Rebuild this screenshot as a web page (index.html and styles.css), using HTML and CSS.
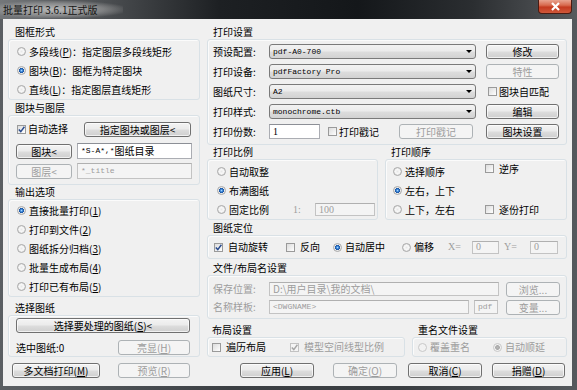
FILE: index.html
```html
<!DOCTYPE html>
<html lang="zh-CN">
<head>
<meta charset="utf-8">
<title>批量打印</title>
<link rel="stylesheet" href="styles.css">
</head>
<body>
<div class="window">
  <div class="titlebar">
    <span class="title">批量打印 3.6.1正式版</span>
    <span class="close"><svg width="11" height="9" viewBox="0 0 11 9"><path d="M2 1 L9 8 M9 1 L2 8" stroke="#fff" stroke-width="2.2"/></svg></span>
  </div>
  <div class="client">
    <div class="main">
      <div class="col-left">
        <div class="glabel">图框形式</div>
        <div class="gbox box-frame">
          <div class="opt r19"><span class="radio"></span><span>多段线(<u>P</u>)：指定图层多段线矩形</span></div>
          <div class="opt r19"><span class="radio on"></span><span>图块(<u>B</u>)：图框为特定图块</span></div>
          <div class="opt r19"><span class="radio"></span><span>直线(<u>L</u>)：指定图层直线矩形</span></div>
        </div>
        <div class="glabel mt1">图块与图层</div>
        <div class="gbox box-layer">
          <div class="row16">
            <span class="check on ml1"><svg width="7" height="7" viewBox="0 0 7 7"><path d="M0.8 3.4 L2.8 5.6 L6.4 0.8" class="tick"/></svg></span><span class="ctext">自动选择</span>
            <span class="btn w107 mla">指定图块或图层&lt;</span>
          </div>
          <div class="row16 mt6">
            <span class="btn w56">图块&lt;</span>
            <span class="input w115 ml5"><span class="mono">*S-A*,*</span>图纸目录</span>
          </div>
          <div class="row16 mt4">
            <span class="btn dis w56">图层&lt;</span>
            <span class="input dis w115 ml5 mono gray">*_title</span>
          </div>
        </div>
        <div class="glabel">输出选项</div>
        <div class="gbox box-out">
          <div class="opt r19"><span class="radio on"></span><span>直接批量打印(<u>1</u>)</span></div>
          <div class="opt r19"><span class="radio"></span><span>打印到文件(<u>2</u>)</span></div>
          <div class="opt r19"><span class="radio"></span><span>图纸拆分归档(<u>3</u>)</span></div>
          <div class="opt r19"><span class="radio"></span><span>批量生成布局(<u>4</u>)</span></div>
          <div class="opt r19"><span class="radio"></span><span>打印已有布局(<u>5</u>)</span></div>
        </div>
        <div class="glabel mt4">选择图纸</div>
        <div class="gbox box-sel">
          <div class="row15"><span class="btn w174">选择要处理的图纸(<u>S</u>)&lt;</span></div>
          <div class="row15 mt7"><span>选中图纸:0</span><span class="btn dis w72 mla">亮显(<u>H</u>)</span></div>
        </div>
      </div>

      <div class="col-right">
        <div class="glabel">打印设置</div>
        <div class="gbox box-print">
          <div class="prow">
            <span class="plabel">预设配置:</span>
            <span class="combo w207"><span class="mono">pdf-A0-700</span><span class="arrow"></span></span>
            <span class="btn w73 ml10">修改</span>
          </div>
          <div class="prow mt5">
            <span class="plabel">打印设备:</span>
            <span class="combo w207"><span class="mono">pdfFactory Pro</span><span class="arrow"></span></span>
            <span class="btn dis w73 ml10">特性</span>
          </div>
          <div class="prow mt5">
            <span class="plabel">图纸尺寸:</span>
            <span class="combo w207"><span class="mono">A2</span><span class="arrow"></span></span>
            <span class="check ml12"></span><span class="ctext">图块自匹配</span>
          </div>
          <div class="prow mt5">
            <span class="plabel">打印样式:</span>
            <span class="combo w207"><span class="mono">monochrome.ctb</span><span class="arrow"></span></span>
            <span class="btn w73 ml10">编辑</span>
          </div>
          <div class="prow mt5">
            <span class="plabel">打印份数:</span>
            <span class="copies">
              <span class="input w51 serif">1</span>
              <span class="check ml8"></span><span class="ctext">打印戳记</span>
              <span class="btn dis w74 mla mr3">打印戳记</span>
            </span>
            <span class="btn w73 ml10">图块设置</span>
          </div>
        </div>

        <div class="pair">
          <div class="sub-l">
            <div class="glabel">打印比例</div>
            <div class="gbox box-scale">
              <div class="opt r19"><span class="radio"></span><span>自动取整</span></div>
              <div class="opt r19"><span class="radio on"></span><span>布满图纸</span></div>
              <div class="opt r19"><span class="radio"></span><span class="scale-t">固定比例</span><span class="gray ratio serif">1:</span><span class="input dis w60 h13 serif gray">100</span></div>
            </div>
          </div>
          <div class="sub-r">
            <div class="glabel">打印顺序</div>
            <div class="gbox box-order">
              <div class="opt r19"><span class="radio"></span><span>选择顺序</span></div>
              <div class="opt r19 up2"><span class="check"></span><span class="ctext">逆序</span></div>
              <div class="opt r19"><span class="radio on"></span><span>左右，上下</span></div>
              <div class="opt r19"></div>
              <div class="opt r19"><span class="radio"></span><span>上下，左右</span></div>
              <div class="opt r19"><span class="check"></span><span class="ctext">逐份打印</span></div>
            </div>
          </div>
        </div>

        <div class="glabel mt1">图纸定位</div>
        <div class="gbox box-pos">
          <div class="opt"><span class="check on"><svg width="7" height="7" viewBox="0 0 7 7"><path d="M0.8 3.4 L2.8 5.6 L6.4 0.8" class="tick"/></svg></span><span class="ctext">自动旋转</span></div>
          <div class="opt"><span class="check"></span><span class="ctext">反向</span></div>
          <div class="opt"><span class="radio on"></span><span>自动居中</span></div>
          <div class="opt"><span class="radio"></span><span>偏移</span></div>
          <div class="opt gray serif">X=</div>
          <span class="input dis h13 serif gray">0</span>
          <div class="opt gray serif pl5">Y=</div>
          <span class="input dis h13 serif gray">0</span>
        </div>

        <div class="glabel mt2">文件/布局名设置</div>
        <div class="gbox box-file">
          <div class="frow">
            <span class="plabel gray">保存位置:</span>
            <span class="input dis w230 gray">D:\用户目录\我的文档\</span>
            <span class="btn dis w54 ml7">浏览...</span>
          </div>
          <div class="frow mt4">
            <span class="plabel gray">名称样板:</span>
            <span class="input dis w200 mono gray">&lt;DWGNAME&gt;</span>
            <span class="input dis w24 ml5 mono gray">pdf</span>
            <span class="btn dis w54 ml8">变量...</span>
          </div>
        </div>

        <div class="pair mt4">
          <div class="sub-l2">
            <div class="glabel pl5">布局设置</div>
            <div class="gbox box-layout">
              <div class="opt w78"><span class="check"></span><span class="ctext">遍历布局</span></div>
              <div class="opt gray"><span class="check dis on"><svg width="7" height="7" viewBox="0 0 7 7"><path d="M0.8 3.4 L2.8 5.6 L6.4 0.8" class="tick"/></svg></span><span class="ctext">模型空间线型比例</span></div>
            </div>
          </div>
          <div class="sub-r2">
            <div class="glabel">重名文件设置</div>
            <div class="gbox box-dup">
              <div class="opt w75 gray"><span class="radio dis"></span><span>覆盖重名</span></div>
              <div class="opt gray"><span class="radio dis on"></span><span>自动顺延</span></div>
            </div>
          </div>
        </div>
      </div>
    </div>

    <div class="bottom">
      <span class="btn w88">多文档打印(<u>M</u>)</span>
      <span class="btn dis w72 ml18">预览(<u>R</u>)</span>
      <span class="btn w74 ml50">应用(<u>L</u>)</span>
      <span class="btn dis w64 ml19">确定(<u>O</u>)</span>
      <span class="btn w74 ml11">取消(<u>C</u>)</span>
      <span class="btn w73 ml10">捐赠(<u>D</u>)</span>
    </div>
  </div>
</div>
</body>
</html>
```

FILE: styles.css
```css
* { box-sizing: border-box; margin: 0; padding: 0; }
html, body { width: 577px; height: 390px; overflow: hidden; }
body {
  background: #3d4145;
  font-family: "Noto Sans CJK SC", "Liberation Sans", sans-serif;
  font-size: 10px;
  line-height: 14px;
  color: #000;
}
u { text-decoration: underline; }

.window {
  width: 577px; height: 390px;
  display: flex; flex-direction: column;
  background: linear-gradient(to right, #5b5f63, #3c4044 40%, #3a3e42 70%, #55595d);
}
.titlebar {
  height: 19px; flex: none;
  display: flex; align-items: flex-start;
  background: linear-gradient(to right, #74777a 0%, #4c4f52 18%, #1d2023 38%, #14171a 62%, #2b2e31 82%, #585b5e 100%);
}
.title {
  margin-top: 1px;
  padding: 2px 26px 2px 3px;
  color: #141414;
  line-height: 13px;
  background: radial-gradient(ellipse at 45% 50%, rgba(200,200,200,0.85) 0%, rgba(170,170,170,0.55) 50%, rgba(150,150,150,0) 78%);
}
.close {
  margin-left: auto; margin-right: 5px;
  width: 34px; height: 14px;
  border: 1px solid #4b1b12; border-top: none;
  border-radius: 0 0 4px 4px;
  background: linear-gradient(#e8a38f 0%, #d86b4f 40%, #c43a1f 55%, #d0583a 100%);
  display: flex; align-items: center; justify-content: center;
}

.client {
  flex: 1;
  margin: 0 5px 4px 3px;
  background: #f0f0f0;
  display: flex; flex-direction: column;
}
.main {
  margin-top: 6px;
  padding-left: 5px;
  display: grid;
  grid-template-columns: 192px 360px;
  column-gap: 7px;
  align-items: start;
}
.col-left, .col-right { display: flex; flex-direction: column; }

.glabel { height: 14px; line-height: 14px; padding-left: 6px; white-space: nowrap; }
.col-left > .glabel { padding-left: 7px; }
.gbox {
  border: 1px solid #d9e1e6;
  border-radius: 3px;
  box-shadow: inset 1px 1px 0 #fbfbfb;
}

.opt { display: flex; align-items: center; gap: 3px; white-space: nowrap; }
.r19 { height: 19px; }
.row16 { height: 16px; display: flex; align-items: center; }
.row15 { height: 15px; display: flex; align-items: center; white-space: nowrap; }

.box-frame { padding: 2px 0 0 8px; }
.box-layer { padding: 5px 8px 5px 7px; }
.box-out { padding: 1px 0 0 8px; }
.box-sel { padding: 2px 9px 1px 7px; }

.box-print { padding: 4px 7px 5px 5px; }
.prow { height: 15px; display: flex; align-items: center; white-space: nowrap; }
.plabel { width: 56px; flex: none; }
.copies { width: 207px; height: 15px; display: flex; align-items: center; flex: none; }

.pair { display: flex; gap: 7px; }
.sub-l { width: 171px; }
.sub-r { width: 182px; }
.box-scale { padding: 2px 0 0 9px; height: 61px; }
.box-order {
  padding: 2px 0 0 7px; height: 61px;
  display: grid; grid-template-columns: 92px auto;
}
.up2 { margin-top: -3px; }
.scale-t { width: 61px; }
.ratio { width: 19px; }

.box-pos {
  height: 24px; padding-left: 6px;
  display: grid;
  grid-template-columns: 72px 47px 69px 46px 24px 27px 31px 28px;
  align-items: center;
}
.box-file { padding: 6px 0 4px 5px; }
.frow { height: 14px; display: flex; align-items: center; white-space: nowrap; }

.sub-l2 { width: 198px; }
.sub-r2 { width: 155px; }
.box-layout { height: 20px; padding-left: 4px; display: flex; align-items: center; }
.box-dup { height: 20px; padding-left: 5px; display: flex; align-items: center; }

.bottom { margin-top: 6px; padding-left: 9px; display: flex; }

/* controls */
.btn {
  height: 15px; flex: none;
  display: flex; align-items: center; justify-content: center;
  border: 1px solid #707070; border-radius: 3px;
  background: linear-gradient(#f3f3f3 0%, #ebebeb 48%, #dddddd 52%, #cfcfcf 100%);
  box-shadow: inset 0 0 0 1px rgba(255,255,255,0.7);
  white-space: nowrap; line-height: 13px;
}
.btn.dis {
  border-color: #adb2b5;
  background: #f4f4f4;
  box-shadow: none;
  color: #9d9d9d;
}
.combo {
  height: 15px; flex: none;
  display: flex; align-items: center;
  border: 1px solid #7a7a7a; border-radius: 3px;
  background: linear-gradient(#f2f2f2 0%, #ebebeb 48%, #dddddd 52%, #d2d2d2 100%);
  padding-left: 3px;
}
.arrow {
  margin-left: auto; margin-right: 3px;
  width: 0; height: 0;
  border-left: 3px solid transparent;
  border-right: 3px solid transparent;
  border-top: 3px solid #000;
}
.input {
  height: 16px; flex: none;
  display: flex; align-items: center;
  border: 1px solid #abadb3; border-top-color: #8c8f96;
  background: #fff;
  padding-left: 3px;
  white-space: nowrap; overflow: hidden;
}
.input.dis { background: #f4f4f4; border-color: #c3c3c3; border-top-color: #b0b0b0; }
.frow .input { height: 14px; }
.prow .input { height: 15px; }
.h13 { height: 13px; }

.radio {
  width: 9px; height: 9px; flex: none;
  border-radius: 50%;
  border: 1px solid #a9a9a9;
  background: radial-gradient(circle at 50% 50%, #e8e8e8 0, #f8f8f8 2px, #dedede 4px);
}
.radio.on {
  background:
    radial-gradient(circle at 50% 50%, #9fd3ff 0, #3c86d6 1.2px, #1b55a4 2.3px, rgba(27,85,164,0) 2.8px),
    radial-gradient(circle at 50% 50%, #fff 0, #f8f8f8 2px, #dedede 4px);
}
.radio.dis { border-color: #c8c8c8; background: #f2f2f2; }
.radio.dis.on {
  background:
    radial-gradient(circle at 50% 50%, #b8b8b8 0, #a8a8a8 2px, rgba(168,168,168,0) 2.7px),
    #f2f2f2;
}
.check {
  width: 9px; height: 9px; flex: none;
  border: 1px solid #9a9a9a;
  background: linear-gradient(135deg, #dcdcdc, #f4f4f4 70%, #fff);
  display: flex; align-items: center; justify-content: center;
}
.check.dis { border-color: #c2c2c2; background: #f4f4f4; }
.tick { fill: none; stroke: #2a4b8d; stroke-width: 1.5; }
.check.dis .tick { stroke: #a6a6a6; }
.ctext { margin-left: 2px; }

.mono { font-family: "Liberation Mono", "Noto Sans CJK SC", monospace; font-size: 8px; }
.serif { font-family: "Liberation Serif", "Noto Sans CJK SC", serif; }
.input.mono { font-size: 8px; }
.gray { color: #9d9d9d; }

/* sizes / spacing */
.w24 { width: 24px; } .w51 { width: 51px; } .w54 { width: 54px; } .w56 { width: 56px; }
.w60 { width: 60px; } .w64 { width: 64px; } .w72 { width: 72px; } .w73 { width: 73px; }
.w74 { width: 74px; } .w75 { width: 75px; } .w78 { width: 78px; } .w88 { width: 88px; }
.w107 { width: 107px; } .w115 { width: 115px; } .w174 { width: 174px; } .w200 { width: 200px; }
.w207 { width: 207px; } .w230 { width: 230px; }
.ml1 { margin-left: 1px; } .ml5 { margin-left: 5px; } .ml7 { margin-left: 7px; } .ml8 { margin-left: 8px; }
.ml10 { margin-left: 10px; } .ml11 { margin-left: 11px; } .ml12 { margin-left: 12px; } .ml18 { margin-left: 18px; }
.ml19 { margin-left: 19px; } .ml50 { margin-left: 50px; } .mla { margin-left: auto; } .mr3 { margin-right: 3px; }
.mt1 { margin-top: 1px; } .mt2 { margin-top: 2px; } .mt4 { margin-top: 4px; } .mt5 { margin-top: 5px; }
.mt6 { margin-top: 6px; } .mt7 { margin-top: 7px; }
.pl5 { padding-left: 5px; }
```
